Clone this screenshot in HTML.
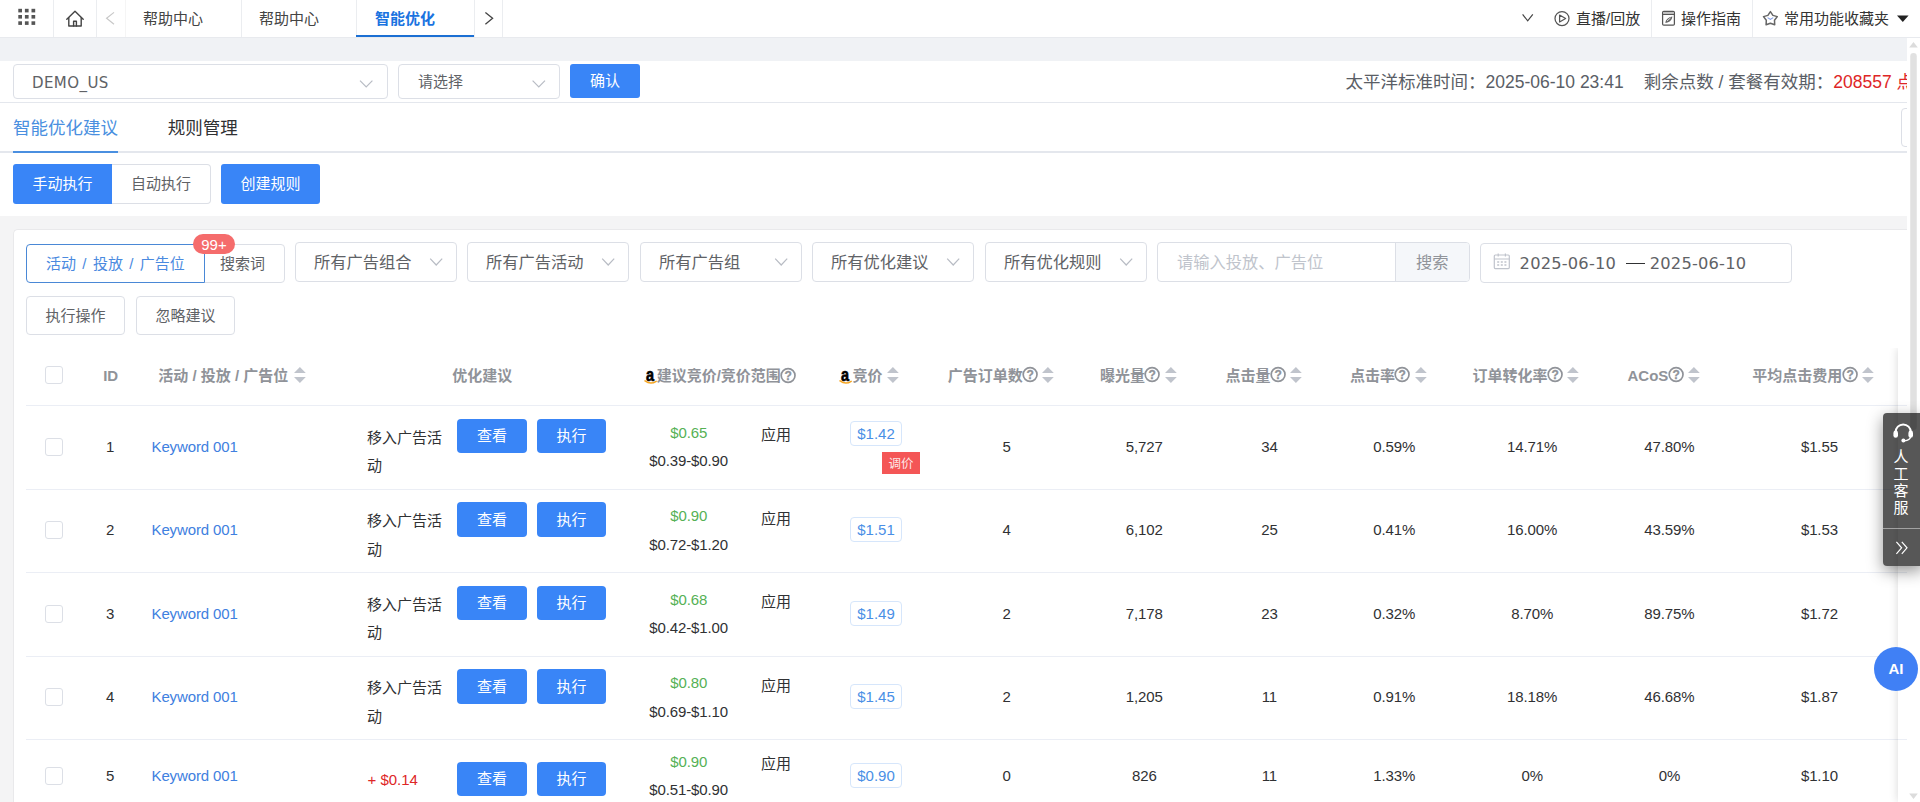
<!DOCTYPE html>
<html lang="zh-CN">
<head>
<meta charset="utf-8">
<title>智能优化</title>
<style>
*{box-sizing:border-box;margin:0;padding:0}
html,body{width:1920px;height:802px;overflow:hidden;background:#f4f4f5}
body{position:relative;font-family:"Liberation Sans","Noto Sans CJK SC",sans-serif;font-size:14px;color:#333;-webkit-font-smoothing:antialiased}
.abs{position:absolute}
.t{position:absolute;white-space:nowrap;line-height:1}
svg{position:absolute;overflow:visible}
/* top bar */
#topbar{position:absolute;left:0;top:0;width:1920px;height:38px;background:#fff;border-bottom:1px solid #e8eaee}
.vd{position:absolute;top:0;width:1px;height:37px;background:#ebedf0}
.tab{position:absolute;top:0;height:37px;line-height:37px;font-size:15px;color:#444;text-align:left;padding-left:18px}
#band{position:absolute;left:0;top:38px;width:1907px;height:23px;background:#f0f2f5}
/* section 1 */
#sec1{position:absolute;left:0;top:61px;width:1907px;height:155px;background:#fff}
.sel{position:absolute;border:1px solid #dcdfe6;border-radius:4px;background:#fff}
.btn{position:absolute;border-radius:3px;background:#3985f7;color:#fff;text-align:center;font-size:15px}
/* card */
#card{position:absolute;left:13px;top:229px;width:1894px;height:580px;background:#fff;border:1px solid #e9e9eb;border-right:none;border-radius:5px 0 0 0}

.th{font-size:15px;font-weight:bold;color:#909399}
.c{width:200px;text-align:center;font-size:15px;color:#303133;line-height:20px;letter-spacing:-.12px}
.l{font-size:15px;color:#303133;line-height:20px}
.lk{color:#4080e0;letter-spacing:-.12px}
.cb{position:absolute;width:18px;height:18px;border:1px solid #dcdfe6;border-radius:3px;background:#fff}
.ln{position:absolute;left:12px;width:1880px;height:1px;background:#ebeef5}
.b2{height:34px;line-height:34px;font-size:15px;border-radius:4px}
.bid{position:absolute;width:52px;height:25px;line-height:23px;border:1px solid #d6e6fb;border-radius:4px;color:#4a8fe6;font-size:15px;text-align:center;background:#fff}
.tag{position:absolute;width:38px;height:22px;line-height:24px;background:#f45656;color:rgba(255,255,255,.88);font-size:12.5px;text-align:center}
.sg{width:78px;font-size:15px;color:#303133;word-break:break-all}
.qt{font-family:"Liberation Sans",sans-serif;font-weight:bold;font-size:12px;fill:#909399;stroke:#909399;stroke-width:.3px}
.at{font-family:"Liberation Sans",sans-serif;font-weight:bold;font-size:19px;fill:#000;stroke:#000;stroke-width:.7px}
</style>
</head>
<body>
<div id="topbar">
<svg style="left:0;top:0" width="60" height="37"><g fill="#555"><rect x="18.3" y="8.8" width="3.7" height="3.6"/><rect x="24.9" y="8.8" width="3.7" height="3.6"/><rect x="31.5" y="8.8" width="3.7" height="3.6"/><rect x="18.3" y="15" width="3.7" height="3.6"/><rect x="24.9" y="15" width="3.7" height="3.6"/><rect x="31.5" y="15" width="3.7" height="3.6"/><rect x="18.3" y="21.3" width="3.7" height="3.6"/><rect x="24.9" y="21.3" width="3.7" height="3.6"/><rect x="31.5" y="21.3" width="3.7" height="3.6"/></g></svg>
<div class="vd" style="left:53px"></div>
<svg style="left:60px;top:0" width="30" height="37"><g fill="none" stroke="#444" stroke-width="1.4" stroke-linejoin="round" stroke-linecap="round"><path d="M6.8 19.3 L15 11.3 L23.2 19.3"/><path d="M8.8 17.8 V26 H21.2 V17.8"/><path d="M13.6 26 V21.2 H16.4 V26"/></g></svg>
<div class="vd" style="left:96px"></div>
<svg style="left:100px;top:0" width="20" height="37"><path d="M14 12.4 L6.6 18.3 L14 24.2" fill="none" stroke="#c8c8c8" stroke-width="1.2"/></svg>
<div class="vd" style="left:125px;background:#f5f5f5"></div>
<div class="tab" style="left:125px;width:116px">帮助中心</div>
<div class="vd" style="left:241px"></div>
<div class="tab" style="left:241px;width:115px">帮助中心</div>
<div class="vd" style="left:356px"></div>
<div class="tab" style="left:356px;width:118px;padding-left:19px;color:#1a73e0;font-weight:bold">智能优化</div>
<div class="abs" style="left:356px;top:35px;width:118px;height:2px;background:#1b6fd3"></div>
<div class="vd" style="left:474px"></div>
<svg style="left:478px;top:0" width="20" height="37"><path d="M7.4 12.4 L14.6 18.3 L7.4 24.2" fill="none" stroke="#444" stroke-width="1.3"/></svg>
<div class="vd" style="left:502px"></div>
<svg style="left:1515px;top:0" width="24" height="37"><path d="M7.6 14.4 L12.7 20.8 L17.8 14.4" fill="none" stroke="#444" stroke-width="1.2"/></svg>
<svg style="left:1550px;top:0" width="24" height="37"><g fill="none" stroke="#555" stroke-width="1.25" stroke-linejoin="round"><circle cx="12" cy="18.6" r="7"/><path d="M9.6 15 L15.6 18.5 L9.6 22 Z"/></g></svg>
<div class="t" style="left:1576px;top:11px;font-size:15px;color:#333">直播/回放</div>
<div class="vd" style="left:1651px"></div>
<svg style="left:1658px;top:0" width="24" height="37"><g fill="none" stroke="#555" stroke-width="1.25" stroke-linejoin="round"><rect x="4.6" y="11.4" width="11.8" height="13.8" rx="1.2"/><path d="M4.6 14.4 H16.4"/><path d="M5.6 12.9 H15.4" stroke="#999" stroke-width="1"/><path d="M7.2 22.8 C7.8 19.4 10.2 17 14.4 16.4 C14 20.2 11.4 22.4 7.2 22.8 Z" fill="#666" stroke="none"/><path d="M9 21 L12.6 17.8" stroke="#fff" stroke-width=".8"/></g></svg>
<div class="t" style="left:1681px;top:11px;font-size:15px;color:#333">操作指南</div>
<div class="vd" style="left:1752px"></div>
<svg style="left:1760px;top:0" width="24" height="37"><path d="M10.4 11.6 L12.9 15.4 L17.3 16.6 L14.5 20.2 L14.7 24.8 L10.4 23.2 L6.1 24.8 L6.3 20.2 L3.5 16.6 L7.9 15.4 Z" fill="none" stroke="#666" stroke-width="1.5" stroke-linejoin="round"/><path d="M7.6 17.6 L10.4 19.4 L13.2 17.6" fill="none" stroke="#7f9be6" stroke-width="1.1"/></svg>
<div class="t" style="left:1784px;top:11px;font-size:15px;color:#333">常用功能收藏夹</div>
<svg style="left:1895px;top:0" width="16" height="37"><path d="M2 15.4 H13.6 L7.8 22 Z" fill="#222"/></svg>
</div>
<div id="band"></div>
<div id="sec1" style="overflow:hidden">
<div class="sel" style="left:13px;top:3px;width:375px;height:35px"></div>
<div class="t" style="left:32px;top:14.5px;font-size:15px;color:#606266;font-family:'DejaVu Sans',sans-serif;letter-spacing:.42px">DEMO_US</div>
<svg style="left:355px;top:0" width="24" height="40"><path d="M5 19.6 L11.2 26 L17.4 19.6" fill="none" stroke="#b8bcc4" stroke-width="1.2"/></svg>
<div class="sel" style="left:398px;top:3px;width:162px;height:35px"></div>
<div class="t" style="left:418px;top:13px;font-size:15px;color:#606266">请选择</div>
<svg style="left:527px;top:0" width="24" height="40"><path d="M5.6 19.6 L11.8 26 L18 19.6" fill="none" stroke="#b8bcc4" stroke-width="1.2"/></svg>
<div class="btn" style="left:570px;top:3px;width:70px;height:34px;line-height:34px">确认</div>
<div class="t" style="left:1345.5px;top:13px;font-size:17.5px;color:#5a5e66">太平洋标准时间：2025-06-10 23:41</div>
<div class="t" style="left:1643.7px;top:13px;font-size:17.5px;color:#5a5e66">剩余点数 / 套餐有效期：<span style="color:#de2626">208557 点</span></div>
<div class="abs" style="left:0;top:41px;width:1907px;height:1px;background:#e4e7ed"></div>
<div class="t" style="left:13px;top:58.5px;font-size:17.5px;color:#4a8fe0">智能优化建议</div>
<div class="t" style="left:167.7px;top:58.5px;font-size:17.5px;color:#303133">规则管理</div>
<div class="abs" style="left:0;top:90px;width:1907px;height:2px;background:#e4e7ed"></div>
<div class="abs" style="left:13px;top:90px;width:105px;height:2px;background:#4a8fe0"></div>
<div class="sel" style="left:1901px;top:47px;width:20px;height:39px"></div>
<div class="btn" style="left:13px;top:103px;width:99px;height:40px;line-height:40px;border-radius:3px 0 0 3px">手动执行</div>
<div class="abs" style="left:112px;top:103px;width:99px;height:40px;line-height:38px;border:1px solid #dcdfe6;border-left:none;border-radius:0 4px 4px 0;font-size:15px;color:#606266;text-align:center">自动执行</div>
<div class="btn" style="left:221px;top:103px;width:99px;height:40px;line-height:40px">创建规则</div>
</div>
<div id="card">
<div class="abs" style="left:190px;top:14px;width:81px;height:39px;border:1px solid #dcdfe6;border-radius:0 4px 4px 0"></div>
<div class="abs" style="left:12px;top:14px;width:179px;height:39px;border:1px solid #4a88d6;border-radius:4px 0 0 4px;background:#fff"></div>
<div class="t" style="left:32px;top:26px;font-size:15px;color:#4a8ae0;word-spacing:2.2px">活动 / 投放 / 广告位</div>
<div class="t" style="left:206px;top:26px;font-size:15px;color:#606266">搜索词</div>
<div class="abs" style="left:179px;top:4px;width:42px;height:20px;border-radius:10px;background:#f56c6c;color:#fff;font-size:15px;line-height:22px;text-align:center">99+</div>
<div class="sel" style="left:281px;top:12px;width:162px;height:40px"></div>
<div class="t" style="left:300px;top:24px;font-size:16.25px;color:#606266">所有广告组合</div>
<svg style="left:411px;top:12px" width="24" height="40"><path d="M5.2 16.6 L11.2 23 L17.2 16.6" fill="none" stroke="#b8bcc4" stroke-width="1.2"/></svg>
<div class="sel" style="left:453px;top:12px;width:162px;height:40px"></div>
<div class="t" style="left:472px;top:24px;font-size:16.25px;color:#606266">所有广告活动</div>
<svg style="left:583px;top:12px" width="24" height="40"><path d="M5.2 16.6 L11.2 23 L17.2 16.6" fill="none" stroke="#b8bcc4" stroke-width="1.2"/></svg>
<div class="sel" style="left:626px;top:12px;width:162px;height:40px"></div>
<div class="t" style="left:645px;top:24px;font-size:16.25px;color:#606266">所有广告组</div>
<svg style="left:756px;top:12px" width="24" height="40"><path d="M5.2 16.6 L11.2 23 L17.2 16.6" fill="none" stroke="#b8bcc4" stroke-width="1.2"/></svg>
<div class="sel" style="left:798px;top:12px;width:162px;height:40px"></div>
<div class="t" style="left:817px;top:24px;font-size:16.25px;color:#606266">所有优化建议</div>
<svg style="left:928px;top:12px" width="24" height="40"><path d="M5.2 16.6 L11.2 23 L17.2 16.6" fill="none" stroke="#b8bcc4" stroke-width="1.2"/></svg>
<div class="sel" style="left:971px;top:12px;width:162px;height:40px"></div>
<div class="t" style="left:990px;top:24px;font-size:16.25px;color:#606266">所有优化规则</div>
<svg style="left:1101px;top:12px" width="24" height="40"><path d="M5.2 16.6 L11.2 23 L17.2 16.6" fill="none" stroke="#b8bcc4" stroke-width="1.2"/></svg>
<div class="sel" style="left:1143px;top:12px;width:313px;height:40px;overflow:hidden"><div class="abs" style="right:0;top:0;width:74px;height:38px;background:#f5f7fa;border-left:1px solid #dcdfe6"></div></div>
<div class="t" style="left:1163px;top:24px;font-size:16.25px;color:#c0c4cc">请输入投放、广告位</div>
<div class="t" style="left:1402px;top:24px;font-size:16.25px;color:#909399">搜索</div>
<div class="sel" style="left:1466px;top:13px;width:312px;height:40px"></div>
<svg style="left:1476px;top:13px" width="24" height="40"><g fill="none" stroke="#c0c4cc" stroke-width="1.2"><rect x="4.3" y="12" width="15" height="13.6" rx="1"/><path d="M4.3 16 H19.3 M8.2 10.6 V13.4 M15.4 10.6 V13.4"/><path d="M7.2 19 H9.2 M10.8 19 H12.8 M14.4 19 H16.4 M7.2 22 H9.2 M10.8 22 H12.8 M14.4 22 H16.4" stroke-width="1.3"/></g></svg>
<div class="t" style="left:1505.6px;top:25.80000000000001px;font-size:16.25px;color:#606266;font-family:'DejaVu Sans','Liberation Sans',sans-serif;letter-spacing:.2px">2025-06-10</div>
<div class="abs" style="left:1612px;top:33px;width:19px;height:1px;background:#303133"></div>
<div class="t" style="left:1635.8px;top:25.80000000000001px;font-size:16.25px;color:#606266;font-family:'DejaVu Sans','Liberation Sans',sans-serif;letter-spacing:.2px">2025-06-10</div>
<div class="abs" style="left:12px;top:66px;width:99px;height:39px;line-height:37px;border:1px solid #dcdfe6;border-radius:4px;font-size:15px;color:#606266;text-align:center">执行操作</div>
<div class="abs" style="left:122px;top:66px;width:99px;height:39px;line-height:37px;border:1px solid #dcdfe6;border-radius:4px;font-size:15px;color:#606266;text-align:center">忽略建议</div>
<!--TABLE-->
<div class="cb" style="left:31px;top:136px"></div>
<div class="t th" style="left:89.2px;top:137.5px">ID</div>
<div class="t th" style="left:144.3px;top:137.5px">活动 / 投放 / 广告位</div>
<svg style="left:280px;top:137px" width="13" height="17"><path d="M0 6 L5.9 0 L11.8 6 Z M0 10 L5.9 16 L11.8 10 Z" fill="#c0c4cc"/></svg>
<div class="t th" style="left:438.3px;top:137.5px">优化建议</div>
<svg style="left:630.5px;top:136px" width="13" height="20"><text x="0" y="14.9" class="at" transform="translate(1.0 0) scale(0.76 1)">a</text><path d="M0 14.9 Q5.6 18.9 11.2 15.3" fill="none" stroke="#f5a623" stroke-width="1.5" stroke-linecap="round"/></svg>
<div class="t th" style="left:642.7px;top:137.5px">建议竞价/竞价范围</div>
<svg style="left:767px;top:138.9px" width="16" height="16"><circle cx="7.1" cy="6.5" r="6.9" fill="none" stroke="#909399" stroke-width="1.7"/><text x="7.1" y="10.9" text-anchor="middle" class="qt">?</text></svg>
<svg style="left:826.2px;top:136px" width="13" height="20"><text x="0" y="14.9" class="at" transform="translate(1.0 0) scale(0.76 1)">a</text><path d="M0 14.9 Q5.6 18.9 11.2 15.3" fill="none" stroke="#f5a623" stroke-width="1.5" stroke-linecap="round"/></svg>
<div class="t th" style="left:838.6px;top:137.5px">竞价</div>
<svg style="left:873.2px;top:137px" width="13" height="17"><path d="M0 6 L5.9 0 L11.8 6 Z M0 10 L5.9 16 L11.8 10 Z" fill="#c0c4cc"/></svg>
<div class="t th" style="left:933.7px;top:137.5px">广告订单数</div>
<svg style="left:1009px;top:137.6px" width="16" height="16"><circle cx="7.1" cy="6.5" r="6.9" fill="none" stroke="#909399" stroke-width="1.7"/><text x="7.1" y="10.9" text-anchor="middle" class="qt">?</text></svg>
<svg style="left:1028.4px;top:137px" width="13" height="17"><path d="M0 6 L5.9 0 L11.8 6 Z M0 10 L5.9 16 L11.8 10 Z" fill="#c0c4cc"/></svg>
<div class="t th" style="left:1086px;top:137.5px">曝光量</div>
<svg style="left:1131.3px;top:137.6px" width="16" height="16"><circle cx="7.1" cy="6.5" r="6.9" fill="none" stroke="#909399" stroke-width="1.7"/><text x="7.1" y="10.9" text-anchor="middle" class="qt">?</text></svg>
<svg style="left:1151.2px;top:137px" width="13" height="17"><path d="M0 6 L5.9 0 L11.8 6 Z M0 10 L5.9 16 L11.8 10 Z" fill="#c0c4cc"/></svg>
<div class="t th" style="left:1211.5px;top:137.5px">点击量</div>
<svg style="left:1256.8px;top:137.6px" width="16" height="16"><circle cx="7.1" cy="6.5" r="6.9" fill="none" stroke="#909399" stroke-width="1.7"/><text x="7.1" y="10.9" text-anchor="middle" class="qt">?</text></svg>
<svg style="left:1276.4px;top:137px" width="13" height="17"><path d="M0 6 L5.9 0 L11.8 6 Z M0 10 L5.9 16 L11.8 10 Z" fill="#c0c4cc"/></svg>
<div class="t th" style="left:1336px;top:137.5px">点击率</div>
<svg style="left:1381.3px;top:137.6px" width="16" height="16"><circle cx="7.1" cy="6.5" r="6.9" fill="none" stroke="#909399" stroke-width="1.7"/><text x="7.1" y="10.9" text-anchor="middle" class="qt">?</text></svg>
<svg style="left:1401.4px;top:137px" width="13" height="17"><path d="M0 6 L5.9 0 L11.8 6 Z M0 10 L5.9 16 L11.8 10 Z" fill="#c0c4cc"/></svg>
<div class="t th" style="left:1458.6px;top:137.5px">订单转化率</div>
<svg style="left:1533.9px;top:137.6px" width="16" height="16"><circle cx="7.1" cy="6.5" r="6.9" fill="none" stroke="#909399" stroke-width="1.7"/><text x="7.1" y="10.9" text-anchor="middle" class="qt">?</text></svg>
<svg style="left:1553.4px;top:137px" width="13" height="17"><path d="M0 6 L5.9 0 L11.8 6 Z M0 10 L5.9 16 L11.8 10 Z" fill="#c0c4cc"/></svg>
<div class="t th" style="left:1613.5px;top:137.5px">ACoS</div>
<svg style="left:1654.5px;top:137.6px" width="16" height="16"><circle cx="7.1" cy="6.5" r="6.9" fill="none" stroke="#909399" stroke-width="1.7"/><text x="7.1" y="10.9" text-anchor="middle" class="qt">?</text></svg>
<svg style="left:1674px;top:137px" width="13" height="17"><path d="M0 6 L5.9 0 L11.8 6 Z M0 10 L5.9 16 L11.8 10 Z" fill="#c0c4cc"/></svg>
<div class="t th" style="left:1738.3px;top:137.5px">平均点击费用</div>
<svg style="left:1828.6px;top:137.6px" width="16" height="16"><circle cx="7.1" cy="6.5" r="6.9" fill="none" stroke="#909399" stroke-width="1.7"/><text x="7.1" y="10.9" text-anchor="middle" class="qt">?</text></svg>
<svg style="left:1848.4px;top:137px" width="13" height="17"><path d="M0 6 L5.9 0 L11.8 6 Z M0 10 L5.9 16 L11.8 10 Z" fill="#c0c4cc"/></svg>
<div class="ln" style="top:175px"></div>
<div class="ln" style="top:259px"></div>
<div class="cb" style="left:31px;top:208px"></div>
<div class="t c " style="left:-4px;top:207px;">1</div>
<div class="t l lk" style="left:137.5px;top:207px;">Keyword 001</div>
<div class="abs sg" style="left:353px;top:194.0px;line-height:28px">移入广告活动</div>
<div class="btn b2" style="left:443px;top:189px;width:70px">查看</div>
<div class="btn b2" style="left:523px;top:189px;width:69px">执行</div>
<div class="t c " style="left:574.7px;top:192.5px;color:#55b155">$0.65</div>
<div class="t c " style="left:574.7px;top:220.5px;">$0.39-$0.90</div>
<div class="t l " style="left:747px;top:194.9px;">应用</div>
<div class="bid" style="left:836px;top:191px">$1.42</div>
<div class="tag" style="left:868px;top:222px">调价</div>
<div class="t c " style="left:892.7px;top:207px;">5</div>
<div class="t c " style="left:1030.3px;top:207px;">5,727</div>
<div class="t c " style="left:1155.4px;top:207px;">34</div>
<div class="t c " style="left:1280.2px;top:207px;">0.59%</div>
<div class="t c " style="left:1418.2px;top:207px;">14.71%</div>
<div class="t c " style="left:1555.4px;top:207px;">47.80%</div>
<div class="t c " style="left:1705.4px;top:207px;">$1.55</div>
<div class="ln" style="top:342px"></div>
<div class="cb" style="left:31px;top:291px"></div>
<div class="t c " style="left:-4px;top:290.2px;">2</div>
<div class="t l lk" style="left:137.5px;top:290.2px;">Keyword 001</div>
<div class="abs sg" style="left:353px;top:275.75px;line-height:29.5px">移入广告活动</div>
<div class="btn b2" style="left:443px;top:272px;width:70px;height:35px;line-height:35px">查看</div>
<div class="btn b2" style="left:523px;top:272px;width:69px;height:35px;line-height:35px">执行</div>
<div class="t c " style="left:574.7px;top:275.5px;color:#55b155">$0.90</div>
<div class="t c " style="left:574.7px;top:304.5px;">$0.72-$1.20</div>
<div class="t l " style="left:747px;top:278.9px;">应用</div>
<div class="bid" style="left:836px;top:287px">$1.51</div>
<div class="t c " style="left:892.7px;top:290.2px;">4</div>
<div class="t c " style="left:1030.3px;top:290.2px;">6,102</div>
<div class="t c " style="left:1155.4px;top:290.2px;">25</div>
<div class="t c " style="left:1280.2px;top:290.2px;">0.41%</div>
<div class="t c " style="left:1418.2px;top:290.2px;">16.00%</div>
<div class="t c " style="left:1555.4px;top:290.2px;">43.59%</div>
<div class="t c " style="left:1705.4px;top:290.2px;">$1.53</div>
<div class="ln" style="top:426px"></div>
<div class="cb" style="left:31px;top:375px"></div>
<div class="t c " style="left:-4px;top:374px;">3</div>
<div class="t l lk" style="left:137.5px;top:374px;">Keyword 001</div>
<div class="abs sg" style="left:353px;top:361.0px;line-height:28px">移入广告活动</div>
<div class="btn b2" style="left:443px;top:356px;width:70px">查看</div>
<div class="btn b2" style="left:523px;top:356px;width:69px">执行</div>
<div class="t c " style="left:574.7px;top:359.5px;color:#55b155">$0.68</div>
<div class="t c " style="left:574.7px;top:387.5px;">$0.42-$1.00</div>
<div class="t l " style="left:747px;top:361.9px;">应用</div>
<div class="bid" style="left:836px;top:371px">$1.49</div>
<div class="t c " style="left:892.7px;top:374px;">2</div>
<div class="t c " style="left:1030.3px;top:374px;">7,178</div>
<div class="t c " style="left:1155.4px;top:374px;">23</div>
<div class="t c " style="left:1280.2px;top:374px;">0.32%</div>
<div class="t c " style="left:1418.2px;top:374px;">8.70%</div>
<div class="t c " style="left:1555.4px;top:374px;">89.75%</div>
<div class="t c " style="left:1705.4px;top:374px;">$1.72</div>
<div class="ln" style="top:509px"></div>
<div class="cb" style="left:31px;top:458px"></div>
<div class="t c " style="left:-4px;top:457.2px;">4</div>
<div class="t l lk" style="left:137.5px;top:457.2px;">Keyword 001</div>
<div class="abs sg" style="left:353px;top:442.75px;line-height:29.5px">移入广告活动</div>
<div class="btn b2" style="left:443px;top:439px;width:70px;height:35px;line-height:35px">查看</div>
<div class="btn b2" style="left:523px;top:439px;width:69px;height:35px;line-height:35px">执行</div>
<div class="t c " style="left:574.7px;top:442.5px;color:#55b155">$0.80</div>
<div class="t c " style="left:574.7px;top:471.5px;">$0.69-$1.10</div>
<div class="t l " style="left:747px;top:445.9px;">应用</div>
<div class="bid" style="left:836px;top:454px">$1.45</div>
<div class="t c " style="left:892.7px;top:457.2px;">2</div>
<div class="t c " style="left:1030.3px;top:457.2px;">1,205</div>
<div class="t c " style="left:1155.4px;top:457.2px;">11</div>
<div class="t c " style="left:1280.2px;top:457.2px;">0.91%</div>
<div class="t c " style="left:1418.2px;top:457.2px;">18.18%</div>
<div class="t c " style="left:1555.4px;top:457.2px;">46.68%</div>
<div class="t c " style="left:1705.4px;top:457.2px;">$1.87</div>
<div class="cb" style="left:31px;top:537px"></div>
<div class="t c " style="left:-4px;top:535.5px;">5</div>
<div class="t l lk" style="left:137.5px;top:535.5px;">Keyword 001</div>
<div class="t l " style="left:353.5px;top:540px;color:#de2626">+ $0.14</div>
<div class="btn b2" style="left:443px;top:532px;width:70px">查看</div>
<div class="btn b2" style="left:523px;top:532px;width:69px">执行</div>
<div class="t c " style="left:574.7px;top:521.5px;color:#55b155">$0.90</div>
<div class="t c " style="left:574.7px;top:549.5px;">$0.51-$0.90</div>
<div class="t l " style="left:747px;top:524px;">应用</div>
<div class="bid" style="left:836px;top:533px">$0.90</div>
<div class="t c " style="left:892.7px;top:535.5px;">0</div>
<div class="t c " style="left:1030.3px;top:535.5px;">826</div>
<div class="t c " style="left:1155.4px;top:535.5px;">11</div>
<div class="t c " style="left:1280.2px;top:535.5px;">1.33%</div>
<div class="t c " style="left:1418.2px;top:535.5px;">0%</div>
<div class="t c " style="left:1555.4px;top:535.5px;">0%</div>
<div class="t c " style="left:1705.4px;top:535.5px;">$1.10</div>
<!--/TABLE-->
</div>
<!-- fixed right column + shadow -->
<div class="abs" style="left:1898px;top:348px;width:9px;height:454px;background:#fff;box-shadow:0 0 10px rgba(0,0,0,.16);clip-path:inset(0 0 0 -14px)"></div>
<div class="abs" style="left:1898px;top:405px;width:9px;height:1px;background:#ebeef5"></div><div class="abs" style="left:1898px;top:489px;width:9px;height:1px;background:#ebeef5"></div><div class="abs" style="left:1898px;top:572px;width:9px;height:1px;background:#ebeef5"></div><div class="abs" style="left:1898px;top:656px;width:9px;height:1px;background:#ebeef5"></div><div class="abs" style="left:1898px;top:739px;width:9px;height:1px;background:#ebeef5"></div>
<!-- scrollbar -->
<div class="abs" style="left:1907px;top:38px;width:13px;height:764px;background:#fff"></div>
<svg style="left:1907px;top:38px" width="13" height="764"><path d="M2.2 9.6 L6.5 4 L10.8 9.6 Z M2.2 755.4 L6.5 761 L10.8 755.4 Z" fill="#dcdcdc"/><rect x="3.25" y="15" width="6.5" height="377" rx="3.25" fill="#e1e1e1"/></svg>
<!-- service widget -->
<div class="abs" style="left:1883px;top:413px;width:40px;height:153px;border-radius:4px 0 0 4px;background:rgba(0,0,0,.66);box-shadow:0 5px 16px rgba(0,0,0,.42)">
<svg style="left:8px;top:8px" width="26" height="26"><g fill="none" stroke="#fff" stroke-width="2" stroke-linecap="round"><path d="M4.6 12.6 V11 A7.6 7.6 0 0 1 19.8 11 V12.6"/><path d="M19.6 15.6 Q19 19.4 13.4 19.8" stroke-width="1.3"/></g><g fill="#fff"><rect x="2.4" y="9.6" width="4.6" height="7.2" rx="2.3"/><rect x="17.4" y="9.6" width="4.6" height="7.2" rx="2.3"/><circle cx="12.4" cy="19.6" r="2"/></g></svg>
<div class="abs" style="left:10px;top:35px;width:16px;font-size:15px;line-height:17.1px;color:#fff;text-align:center">人工客服</div>
<div class="abs" style="left:0;top:115px;width:40px;height:1px;background:rgba(255,255,255,.45)"></div>
<svg style="left:10px;top:124px" width="20" height="20"><path d="M3.4 4.8 L8.6 10.8 L3.4 16.8 M8.8 4.8 L14 10.8 L8.8 16.8" fill="none" stroke="#fff" stroke-width="1.2"/></svg>
</div>
<!-- AI -->
<div class="abs" style="left:1874px;top:647px;width:44px;height:44px;border-radius:22px;background:#4080f5;color:#fff;font-weight:bold;font-size:15px;line-height:44px;text-align:center">AI</div>
</body>
</html>
